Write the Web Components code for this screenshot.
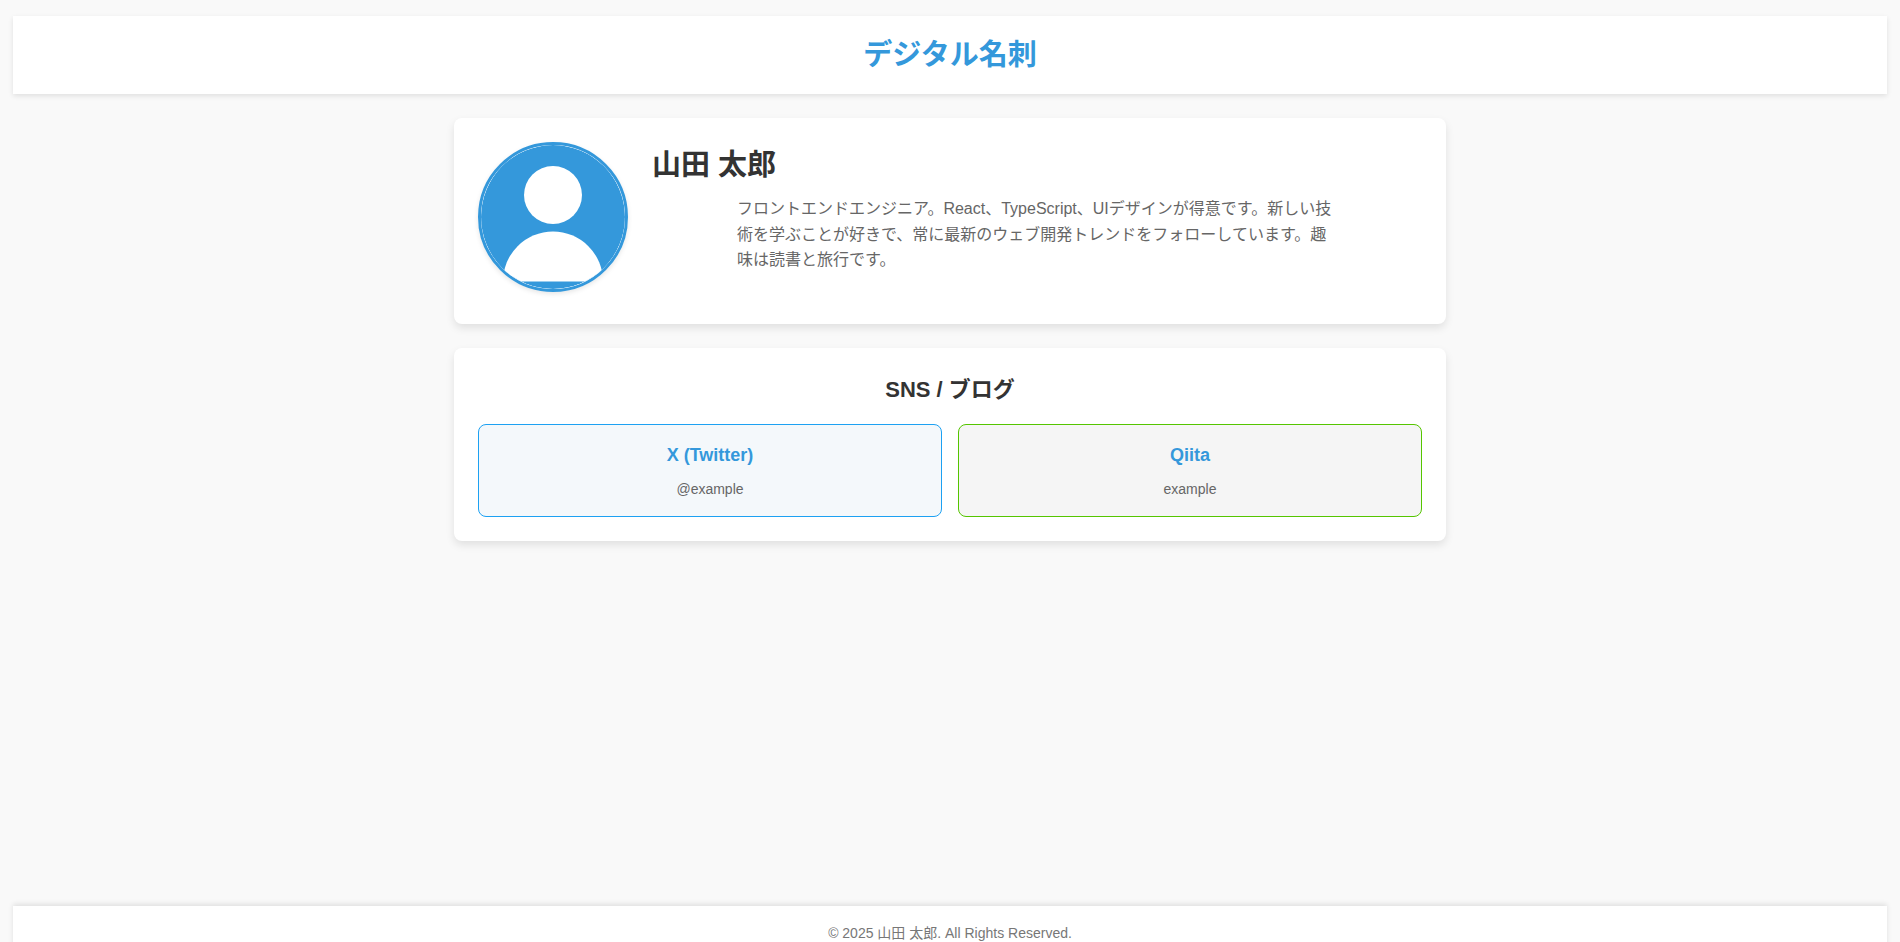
<!DOCTYPE html>
<html lang="ja">
<head>
<meta charset="utf-8">
<meta name="viewport" content="width=device-width, initial-scale=1">
<title>デジタル名刺</title>
<style>
  body {
    margin: 0;
    background-color: #f9f9f9;
    color: #333;
    font-family: "Liberation Sans", "Noto Sans CJK JP", sans-serif;
    font-size: 16px;
    line-height: 1.6;
  }
</style>
</head>
<body>
<card-app></card-app>

<script>
/**
 * Page Header.
 *
 * A white bar with the page title.
 */
class PageHeader extends HTMLElement {

  constructor() {
    super();

    this.attachShadow({ mode: 'open' });
    const template = document.createElement('template');

    template.innerHTML = `
      <style>
        :host {
          display: block;
        }

        header {
          padding: 16px;
          background-color: #fff;
          box-shadow: 0 2px 5px rgba(0, 0, 0, 0.1);
          text-align: center;
        }

        h1 {
          margin: 0;
          color: #3498db;
          font-size: 29px;
          line-height: 46px;
        }
      </style>
      <header>
        <h1><slot></slot></h1>
      </header>
    `;

    this.shadowRoot.appendChild(template.content.cloneNode(true));
  }

}

/**
 * Card Panel.
 *
 * A rounded white section which holds slotted content.
 */
class CardPanel extends HTMLElement {

  constructor() {
    super();

    this.attachShadow({ mode: 'open' });
    const template = document.createElement('template');

    template.innerHTML = `
      <style>
        :host {
          display: block;
        }

        section {
          padding: 24px;
          border-radius: 8px;
          background-color: #fff;
          box-shadow: 0 4px 8px rgba(0, 0, 0, 0.1);
        }
      </style>
      <section><slot></slot></section>
    `;

    this.shadowRoot.appendChild(template.content.cloneNode(true));
  }

}

/**
 * Profile Avatar.
 *
 * A round placeholder portrait.
 */
class ProfileAvatar extends HTMLElement {

  constructor() {
    super();

    this.attachShadow({ mode: 'open' });
    const template = document.createElement('template');

    template.innerHTML = `
      <style>
        :host {
          display: block;
          flex: none;
        }

        svg {
          display: block;
          width: 144px;
          height: 144px;
          border: 3px solid #3498db;
          border-radius: 50%;
          box-shadow: 0 2px 5px rgba(0, 0, 0, 0.1);
        }
      </style>
      <svg viewBox="0 0 144 144" role="img" aria-label="プロフィール画像">
        <circle cx="72" cy="72" r="72" fill="#3498db"/>
        <circle cx="72" cy="50" r="29" fill="#fff"/>
        <path d="M22 136.500a50 50 0 0 1 100 0z" fill="#fff"/>
      </svg>
    `;

    this.shadowRoot.appendChild(template.content.cloneNode(true));
  }

}

/**
 * Profile Summary.
 *
 * Avatar, name and a short biography.
 */
class ProfileSummary extends HTMLElement {

  constructor() {
    super();

    this.attachShadow({ mode: 'open' });
    const template = document.createElement('template');

    template.innerHTML = `
      <style>
        :host {
          display: flex;
          align-items: flex-start;
          gap: 24px;
        }

        profile-avatar {
          padding-bottom: 8px;
        }

        .info {
          flex: 1;
        }

        h2 {
          margin: 0 0 8px;
          font-size: 29px;
          line-height: 46px;
        }

        p {
          max-width: 600px;
          margin: 0 auto;
          color: #666;
          line-height: 1.6;
        }
      </style>
      <profile-avatar></profile-avatar>
      <div class="info">
        <h2><slot name="name"></slot></h2>
        <p><slot></slot></p>
      </div>
    `;

    this.shadowRoot.appendChild(template.content.cloneNode(true));
  }

}

/**
 * Social Link.
 *
 * A bordered tile linking to an account on another service.
 */
class SocialLink extends HTMLElement {

  constructor() {
    super();

    this.attachShadow({ mode: 'open' });
    const template = document.createElement('template');

    template.innerHTML = `
      <style>
        :host {
          display: block;
          --accent: #1da1f2;
          --tint: #f4f8fb;
        }

        :host([service="qiita"]) {
          --accent: #55c500;
          --tint: #f5f5f5;
        }

        a {
          display: block;
          padding: 16px;
          border: 1px solid var(--accent);
          border-radius: 8px;
          background-color: var(--tint);
          text-align: center;
          text-decoration: none;
        }

        h3 {
          margin: 0 0 8px;
          color: #3498db;
          font-size: 18px;
          line-height: 29px;
        }

        p {
          margin: 0;
          color: #666;
          font-size: 14px;
          line-height: 22px;
        }
      </style>
      <a>
        <h3><slot></slot></h3>
        <p><slot name="account"></slot></p>
      </a>
    `;

    this.shadowRoot.appendChild(template.content.cloneNode(true));
    this.link = this.shadowRoot.querySelector('a');
  }

  /**
   * Point the tile at its account when added to the document.
   */
  connectedCallback() {
    this.link.href = this.getAttribute('href');
  }

}

/**
 * Social Links.
 *
 * A titled grid of social links.
 */
class SocialLinks extends HTMLElement {

  constructor() {
    super();

    this.attachShadow({ mode: 'open' });
    const template = document.createElement('template');

    template.innerHTML = `
      <style>
        :host {
          display: block;
        }

        h2 {
          margin: 0 0 16px;
          font-size: 22px;
          line-height: 36px;
          text-align: center;
        }

        .links {
          display: grid;
          grid-template-columns: repeat(auto-fit, minmax(200px, 1fr));
          gap: 16px;
        }
      </style>
      <h2><slot name="title"></slot></h2>
      <div class="links"><slot></slot></div>
    `;

    this.shadowRoot.appendChild(template.content.cloneNode(true));
  }

}

/**
 * Page Footer.
 *
 * The copyright notice.
 */
class PageFooter extends HTMLElement {

  constructor() {
    super();

    this.attachShadow({ mode: 'open' });
    const template = document.createElement('template');

    template.innerHTML = `
      <style>
        :host {
          display: block;
        }

        footer {
          padding: 16px;
          background-color: #fff;
          box-shadow: 0 -2px 5px rgba(0, 0, 0, 0.1);
          text-align: center;
        }

        p {
          margin: 0;
          color: #777;
          font-size: 14px;
          line-height: 22px;
        }
      </style>
      <footer>
        <p><slot></slot></p>
      </footer>
    `;

    this.shadowRoot.appendChild(template.content.cloneNode(true));
  }

}

/**
 * Card App.
 *
 * The whole digital business card page.
 */
class CardApp extends HTMLElement {

  constructor() {
    super();

    this.attachShadow({ mode: 'open' });
    const template = document.createElement('template');

    template.innerHTML = `
      <style>
        :host {
          display: flex;
          flex-direction: column;
          gap: 24px;
          min-height: calc(100vh + 2px);
          padding: 16px 13px;
        }

        main {
          flex: 1;
          display: flex;
          flex-direction: column;
          gap: 24px;
          box-sizing: border-box;
          width: 100%;
          max-width: 992px;
          margin: 0 auto;
        }
      </style>
      <page-header>デジタル名刺</page-header>
      <main>
        <card-panel>
          <profile-summary>
            <span slot="name">山田 太郎</span>
            フロントエンドエンジニア。React、TypeScript、UIデザインが得意です。新しい技術を学ぶことが好きで、常に最新のウェブ開発トレンドをフォローしています。趣味は読書と旅行です。
          </profile-summary>
        </card-panel>
        <card-panel>
          <social-links>
            <span slot="title">SNS / ブログ</span>
            <social-link service="x" href="https://twitter.com/example">
              X (Twitter)
              <span slot="account">@example</span>
            </social-link>
            <social-link service="qiita" href="https://qiita.com/example">
              Qiita
              <span slot="account">example</span>
            </social-link>
          </social-links>
        </card-panel>
      </main>
      <page-footer>© 2025 山田 太郎. All Rights Reserved.</page-footer>
    `;

    this.shadowRoot.appendChild(template.content.cloneNode(true));
  }

}

// Register custom elements
customElements.define('page-header', PageHeader);
customElements.define('card-panel', CardPanel);
customElements.define('profile-avatar', ProfileAvatar);
customElements.define('profile-summary', ProfileSummary);
customElements.define('social-link', SocialLink);
customElements.define('social-links', SocialLinks);
customElements.define('page-footer', PageFooter);
customElements.define('card-app', CardApp);
</script>
</body>
</html>
